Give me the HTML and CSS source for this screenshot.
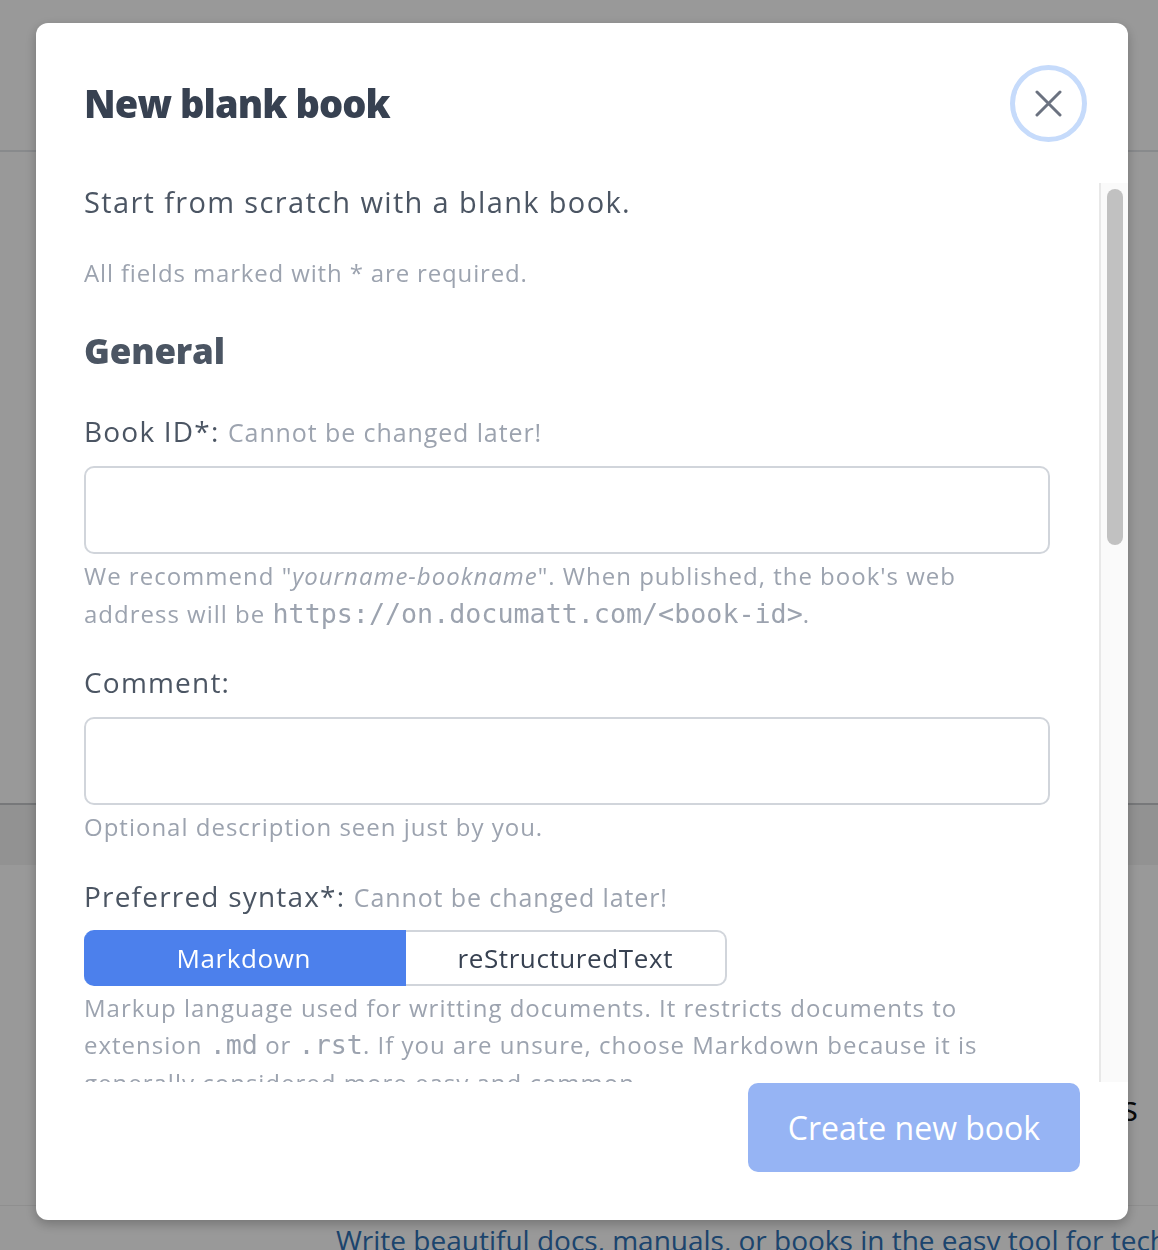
FILE: index.html
```html
<!doctype html>
<html>

<head>
    <title>New blank book</title>
    <link rel="stylesheet" href="styles.css">
</head>

<body>

    <div id="side">
        <div class="topbar"></div>
        <div class="band"></div>
        <div class="features"><span>Features</span></div>
        <p class="tagline">Write beautiful docs, manuals, or books in the easy tool for technical writers.</p>
    </div>

    <div class="overlay">
        <div class="modal">
            <div class="modal-head">
                <h1>New blank book</h1>
                <button class="close" aria-label="Close">
                    <svg width="27" height="27" viewBox="0 0 27 27">
                        <path d="M2 2 L25 25 M25 2 L2 25" stroke="#6b7280" stroke-width="3" stroke-linecap="round" fill="none"/>
                    </svg>
                </button>
            </div>

            <div class="body-wrap">
                <div class="modal-body">
                    <p class="lead">Start from scratch with a blank book.</p>
                    <p class="hint">All fields marked with * are required.</p>

                    <h2>General</h2>

                    <label class="field-label" for="bookid">Book ID*: <span class="muted">Cannot be changed later!</span></label>
                    <input id="bookid" class="field" type="text">
                    <p class="help">We recommend "<em>yourname-bookname</em>". When published, the book's web
                        address will be <code>https://on.documatt.com/&lt;book-id&gt;</code>.</p>

                    <label class="field-label" for="comment">Comment:</label>
                    <input id="comment" class="field" type="text">
                    <p class="help">Optional description seen just by you.</p>

                    <div class="field-label">Preferred syntax*: <span class="muted">Cannot be changed later!</span></div>
                    <div class="toggle">
                        <button class="opt on">Markdown</button>
                        <button class="opt">reStructuredText</button>
                    </div>
                    <p class="help">Markup language used for writting documents. It restricts documents to
                        extension <code>.md</code> or <code>.rst</code>. If you are unsure, choose Markdown because it is
                        generally considered more easy and common.</p>
                </div>
                <div class="scrollbar"><div class="thumb"></div></div>
            </div>

            <div class="modal-foot">
                <button class="create" disabled>Create new book</button>
            </div>
        </div>
    </div>

</body>

</html>
```

FILE: styles.css
```css
body {
    margin: 0;
    background-color: white;
    font-family: "Open Sans", "Noto Sans", sans-serif;
    overflow: hidden;
}

/* page behind the dialog */
#side {
    height: 1250px;
}

.topbar {
    height: 150px;
    border-bottom: 2px solid #e3e6ea;
}

.band {
    height: 651px;
    border-bottom: 2px solid #c7c9cc;
}

.features {
    height: 340px;
    border-top: 60px solid #f4f4f4;
    text-align: right;
    font-size: 34px;
    color: #111;
}

.features span {
    display: inline-block;
    margin-top: 220px;
    margin-right: 20px;
}

.tagline {
    margin: 0;
    padding: 14px 0 0 336px;
    border-top: 1px solid #eee;
    font-size: 28px;
    line-height: 40px;
    color: #2f72b6;
    white-space: nowrap;
}

/* dialog */
.overlay {
    position: fixed;
    top: 0;
    left: 0;
    right: 0;
    bottom: 0;
    background-color: rgba(0, 0, 0, 0.4);
    padding: 23px 30px 30px 36px;
}

.modal {
    height: 1197px;
    background-color: white;
    border-radius: 12px;
    box-shadow: 0 4px 12px rgba(0, 0, 0, 0.25);
    display: flex;
    flex-direction: column;
    overflow: hidden;
}

.modal-head {
    height: 160px;
    flex-shrink: 0;
    display: flex;
    align-items: center;
    justify-content: space-between;
    padding: 0 41px 0 48px;
}

.modal-head h1 {
    margin: 0;
    font-size: 38px;
    font-weight: 800;
    letter-spacing: -0.9px;
    color: #374151;
}

.close {
    width: 77px;
    height: 77px;
    box-sizing: border-box;
    border: 5px solid #c6dbfb;
    border-radius: 50%;
    background-color: white;
    display: flex;
    align-items: center;
    justify-content: center;
    padding: 0;
}

.body-wrap {
    flex: 1;
    min-height: 0;
    display: flex;
}

.modal-body {
    flex: 1;
    overflow: hidden;
    padding: 0 49px 0 48px;
    color: #4b5563;
}

.scrollbar {
    width: 29px;
    box-sizing: border-box;
    background-color: #fafafa;
    border-left: 2px solid #e8e8e8;
    padding: 6px 5px 0 6px;
}

.thumb {
    height: 356px;
    border-radius: 8px;
    background-color: #c1c1c1;
}

.modal-body p {
    margin: 0;
}

.lead {
    font-size: 29px;
    line-height: 38px;
    letter-spacing: 1.35px;
}

.hint {
    margin-top: 35px !important;
    font-size: 24px;
    line-height: 34px;
    letter-spacing: 0.85px;
    color: #9ca3af;
}

.modal-body h2 {
    margin: 39px 0 0 0;
    font-size: 35px;
    line-height: 44px;
    font-weight: 800;
    letter-spacing: -0.2px;
}

.field-label {
    display: block;
    height: 38px;
    margin-top: 39px;
    font-size: 28px;
    line-height: 38px;
    letter-spacing: 1.2px;
}

.muted {
    font-size: 25px;
    line-height: 1;
    letter-spacing: 0.9px;
    color: #9ca3af;
}

.field {
    display: block;
    box-sizing: border-box;
    width: 100%;
    height: 88px;
    margin-top: 16px;
    border: 2px solid #d1d5db;
    border-radius: 10px;
    font-size: 26px;
}

.help {
    margin-top: 3px !important;
    font-size: 24px;
    line-height: 37.5px;
    letter-spacing: 1px;
    color: #9ca3af;
}

.help + .field-label {
    margin-top: 31px;
}

.help code {
    font-family: "DejaVu Sans Mono", monospace;
    font-size: 26.7px;
    line-height: 1;
    letter-spacing: 0;
}

.toggle {
    display: flex;
    width: 643px;
    height: 56px;
    margin-top: 15px;
}

.opt {
    flex: 1;
    font-family: inherit;
    font-size: 26px;
    letter-spacing: 0.6px;
    color: #374151;
    background-color: white;
    border: 2px solid #d1d5db;
    border-left: none;
    border-radius: 0 10px 10px 0;
}

.opt.on {
    background-color: #4c80ec;
    border-color: #4c80ec;
    color: white;
    border-radius: 10px 0 0 10px;
}

.modal-foot {
    flex-shrink: 0;
    display: flex;
    justify-content: flex-end;
    padding: 1px 48px 48px 48px;
}

.create {
    width: 332px;
    height: 89px;
    border: none;
    border-radius: 10px;
    background-color: #96b4f4;
    color: white;
    font-family: inherit;
    font-size: 32px;
}
```
